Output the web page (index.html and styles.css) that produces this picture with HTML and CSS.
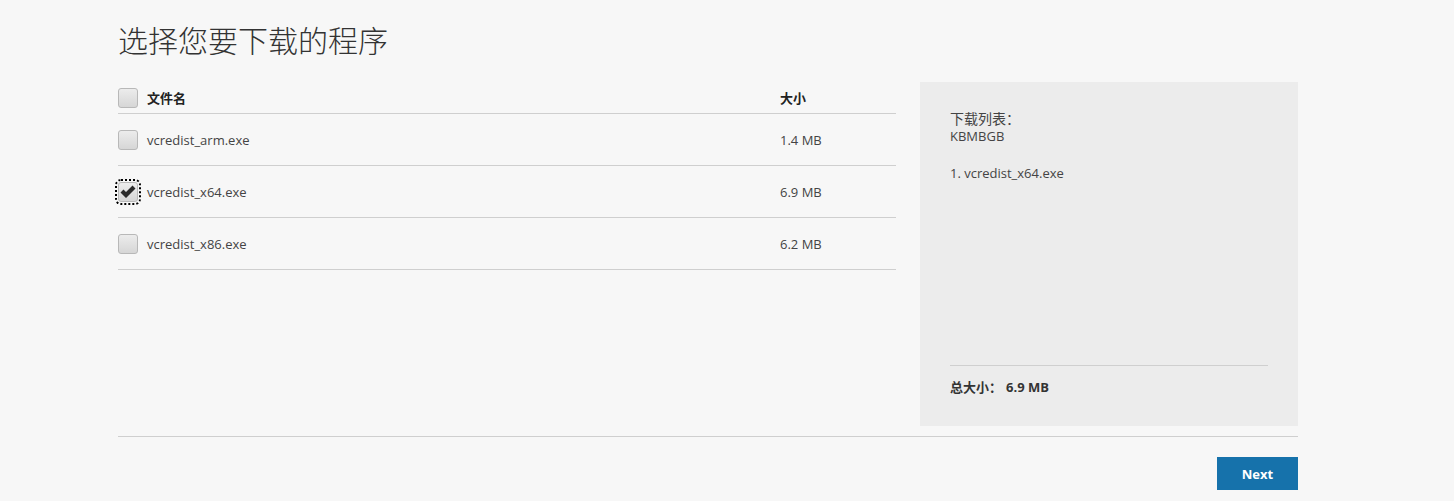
FILE: index.html
```html
<!DOCTYPE html>
<html lang="zh-CN">
<head>
<meta charset="utf-8">
<title>选择您要下载的程序</title>
<link rel="stylesheet" href="styles.css">
</head>
<body>
<div class="page">
  <h1 class="title">选择您要下载的程序</h1>
  <div class="main">
    <div class="table">
      <div class="row head">
        <div class="c-check"><span class="cb"></span></div>
        <div class="c-name">文件名</div>
        <div class="c-size">大小</div>
      </div>
      <div class="row">
        <div class="c-check"><span class="cb"></span></div>
        <div class="c-name">vcredist_arm.exe</div>
        <div class="c-size">1.4 MB</div>
      </div>
      <div class="row">
        <div class="c-check"><span class="cb checked"><svg viewBox="0 0 20 20" width="20" height="20"><path d="M2.5 10.5 L5.5 7.5 L8 10 L14.5 3.5 L17.5 6.5 L8 16 Z" fill="#2b2b2b"/></svg></span></div>
        <div class="c-name">vcredist_x64.exe</div>
        <div class="c-size">6.9 MB</div>
      </div>
      <div class="row">
        <div class="c-check"><span class="cb"></span></div>
        <div class="c-name">vcredist_x86.exe</div>
        <div class="c-size">6.2 MB</div>
      </div>
    </div>
    <aside class="panel">
      <div class="p-title">下载列表：</div>
      <div class="p-sub">KBMBGB</div>
      <ol class="p-list">
        <li>1. vcredist_x64.exe</li>
      </ol>
      <div class="p-total"><span class="t-label">总大小：</span><span class="t-val">6.9 MB</span></div>
    </aside>
  </div>
  <div class="footer">
    <button class="next">Next</button>
  </div>
</div>
</body>
</html>
```
FILE: styles.css
```css
html, body {
  margin: 0;
  padding: 0;
  background: #f7f7f7;
}
body {
  font-family: "Open Sans", "Noto Sans CJK SC", sans-serif;
  color: #333;
}
.page {
  width: 1180px;
  margin-left: 118px;
}
.title {
  margin: 0;
  padding-top: 19px;
  height: 82px;
  box-sizing: border-box;
  font-family: "Noto Sans CJK SC", sans-serif;
  font-weight: 300;
  font-size: 30px;
  line-height: 40px;
  color: #333;
}
.main {
  display: flex;
  gap: 24px;
  align-items: flex-start;
}
.table {
  width: 778px;
}
.row {
  display: flex;
  align-items: center;
  height: 51px;
  border-bottom: 1px solid #cfcfcf;
  font-size: 13px;
  color: #444;
}
.row.head {
  height: 31px;
  font-family: "Noto Sans CJK SC", sans-serif;
  font-weight: bold;
  font-size: 13px;
  color: #222;
}
.c-check {
  width: 29px;
  display: flex;
  align-items: center;
}
.c-name {
  width: 633px;
}
.c-size {
  flex: 1;
}
.cb {
  display: block;
  width: 18px;
  height: 18px;
  border: 1px solid #b8b8b8;
  border-radius: 3px;
  background: linear-gradient(#ececec, #d6d6d6);
  position: relative;
}
.cb svg {
  position: absolute;
  left: -1px;
  top: -1px;
}
.cb.checked {
  outline: 2px dotted #000;
  outline-offset: 1px;
}
.panel {
  width: 378px;
  height: 344px;
  box-sizing: border-box;
  background: #ececec;
  padding: 26px 30px 30px;
  display: flex;
  flex-direction: column;
  color: #444;
}
.p-title {
  font-family: "Noto Sans CJK SC", sans-serif;
  font-size: 14px;
  line-height: 20px;
}
.p-sub {
  font-size: 13px;
  line-height: 16px;
}
.p-list {
  list-style: none;
  margin: 20px 0 0;
  padding: 0;
  font-size: 13px;
  line-height: 18px;
}
.p-total {
  margin-top: auto;
  border-top: 1px solid #cfcfcf;
  padding-top: 12px;
  font-size: 13px;
  font-weight: bold;
  line-height: 18px;
  color: #333;
}
.t-label {
  font-family: "Noto Sans CJK SC", sans-serif;
  margin-right: 4px;
}
.footer {
  margin-top: 10px;
  border-top: 1px solid #cfcfcf;
  padding-top: 20px;
  display: flex;
  justify-content: flex-end;
}
.next {
  width: 81px;
  height: 33px;
  border: none;
  background: #1672ab;
  color: #fff;
  font-family: "Open Sans", sans-serif;
  font-weight: bold;
  font-size: 13px;
  padding: 0;
}
```
